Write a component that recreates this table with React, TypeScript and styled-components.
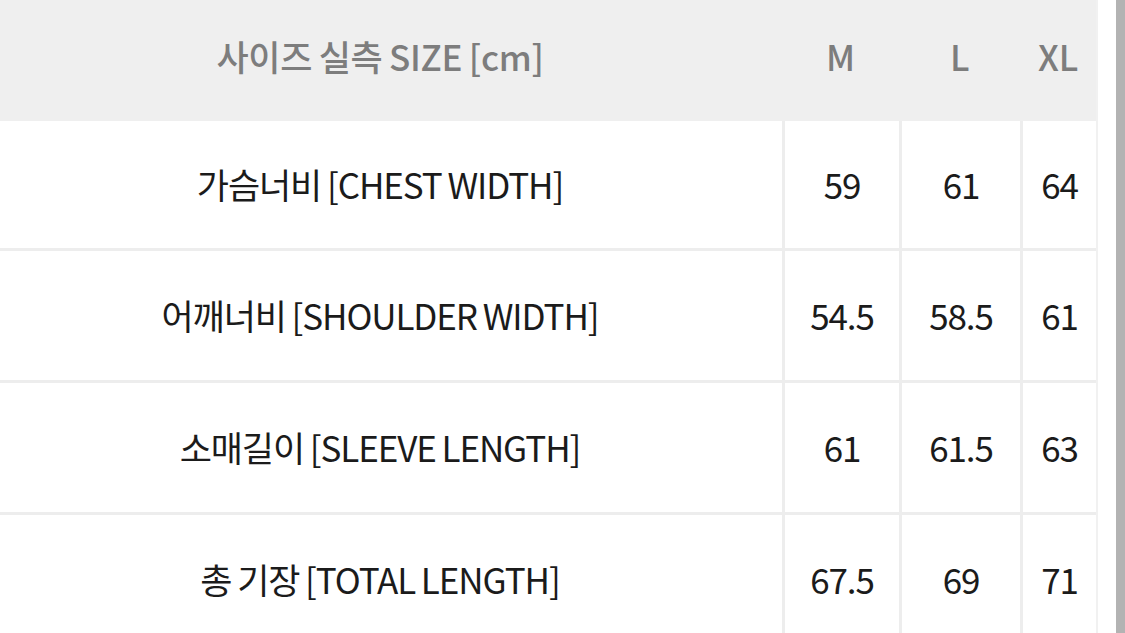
import { FC } from "react"
import styled, { createGlobalStyle } from "styled-components"

const GlobalStyle = createGlobalStyle`
  html, body {
    margin: 0;
    padding: 0;
    background: #ffffff;
  }
  body {
    font-family: "Noto Sans CJK KR", "Noto Sans", sans-serif;
    overflow: hidden;
  }
`

// #region styled
const Page = styled.div`
  display: flex;
  width: 1125px;
  height: 633px;
  overflow: hidden;
`

const Table = styled.div`
  width: 1098px;
  display: flex;
  flex-direction: column;
  border-right: 2px solid #f1f1f1;
  box-sizing: border-box;
`

const Gutter = styled.div`
  width: 18px;
  background: #ffffff;
`

const ScrollBar = styled.div`
  width: 9px;
  background: #b3b3b3;
`

const Row = styled.div<{ $head?: boolean }>`
  display: grid;
  grid-template-columns: 782px 117px 121px 76px;
  flex: none;
  height: ${p => (p.$head ? "121px" : "129px")};
  background: ${p => (p.$head ? "#efefef" : "#ffffff")};
  border-top: ${p => (p.$head ? "none" : "3px solid #ededed")};

  &:nth-child(2) {
    border-top: none;
    height: 127px;
  }
`

const Cell = styled.div<{ $head?: boolean; $first?: boolean }>`
  display: flex;
  align-items: center;
  justify-content: center;
  box-sizing: border-box;
  border-left: ${p => (p.$head || p.$first ? "none" : "3px solid #ededed")};
  color: ${p => (p.$head ? "#7d7d7d" : "#1b1b1b")};
  font-weight: ${p => (p.$head ? 500 : 400)};
  font-size: 35px;
  letter-spacing: ${p => (p.$head ? "-0.3px" : "-1.1px")};
  word-spacing: -1px;
  white-space: nowrap;
  padding-bottom: ${p => (p.$head ? "10px" : "2px")};
`

const LabelCell = styled(Cell)`
  padding-right: 22px;
`
// #endregion

type Measure = { label: string; values: string[] }

const sizes = ["M", "L", "XL"]

const measures: Measure[] = [
  { label: "가슴너비 [CHEST WIDTH]", values: ["59", "61", "64"] },
  { label: "어깨너비 [SHOULDER WIDTH]", values: ["54.5", "58.5", "61"] },
  { label: "소매길이 [SLEEVE LENGTH]", values: ["61", "61.5", "63"] },
  { label: "총 기장 [TOTAL LENGTH]", values: ["67.5", "69", "71"] },
]

const App: FC = () => (
  <>
    <GlobalStyle />
    <Page>
      <Table>
        <Row $head>
          <LabelCell $head>사이즈 실측 SIZE [cm]</LabelCell>
          {sizes.map(s => (
            <Cell $head key={s}>{s}</Cell>
          ))}
        </Row>
        {measures.map(m => (
          <Row key={m.label}>
            <LabelCell $first>{m.label}</LabelCell>
            {m.values.map((v, i) => (
              <Cell key={i}>{v}</Cell>
            ))}
          </Row>
        ))}
      </Table>
      <Gutter />
      <ScrollBar />
    </Page>
  </>
)

export default App
